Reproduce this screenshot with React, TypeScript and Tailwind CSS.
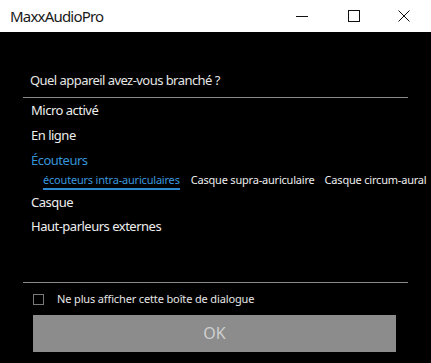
import React from 'react'

const FONT = { fontFamily: '"Noto Sans", "Open Sans", sans-serif' }

function TitleBar() {
  return (
    <div className="flex h-8 items-center bg-white text-[#1a1a1a]">
      <span className="pl-[10px] text-[15px] tracking-[-0.8px]">MaxxAudioPro</span>
      <div className="ml-auto flex h-full items-center">
        <div className="flex h-full w-[46px] items-center justify-center">
          <svg width="12" height="12" viewBox="0 0 12 12"><path d="M0 6.5h12" stroke="#111" strokeWidth="1" /></svg>
        </div>
        <div className="flex h-full w-[57px] items-center justify-center">
          <svg width="12" height="12" viewBox="0 0 12 12"><rect x="0.5" y="0.5" width="11" height="11" fill="none" stroke="#111" strokeWidth="1" /></svg>
        </div>
        <div className="flex h-full w-[49px] items-center justify-center pr-[6px]">
          <svg width="12" height="12" viewBox="0 0 12 12"><path d="M0.5 0.5l11 11M11.5 0.5l-11 11" stroke="#111" strokeWidth="1" /></svg>
        </div>
      </div>
    </div>
  )
}

export default function App() {
  const [checked, setChecked] = React.useState(false)
  return (
    <div className="h-[363px] w-[431px] overflow-hidden bg-black" style={FONT}>
      <TitleBar />
      <div className="flex flex-col">
        <div className="pl-[30px] pt-[38px] text-[13px] leading-5 tracking-[-0.55px] text-[#e6e6e6]">Quel appareil avez-vous branché ?</div>
        <div className="mx-[23px] mt-[7px] h-px bg-[#8a8a8a]" />
        <div className="flex flex-col pl-[31px] text-[13px] tracking-[-0.5px] text-[#eeeeee]">
          <div className="flex h-[25px] items-center">Micro activé</div>
          <div className="flex h-[25px] items-center">En ligne</div>
          <div className="flex h-[25px] items-center text-[#3593d8]">Écouteurs</div>
          <div className="flex h-[16px] items-start whitespace-nowrap pl-[12px] text-[11px] leading-[14px] tracking-[-0.2px]">
            <span className="border-b-2 border-[#2e8ad0] pb-[1px] text-[#3a98de]">écouteurs intra-auriculaires</span>
            <span className="pl-[11px]">Casque supra-auriculaire</span>
            <span className="pl-[10px]">Casque circum-aural</span>
          </div>
          <div className="flex h-[25px] items-center pt-[2px]">Casque</div>
          <div className="flex h-[25px] items-center">Haut-parleurs externes</div>
        </div>
        <div className="mx-[23px] mt-[43px] h-px bg-[#8a8a8a]" />
        <label className="flex items-center pl-[33px] pt-[8px] text-[11px] tracking-[-0.14px] text-[#e6e6e6]">
          <input type="checkbox" checked={checked} onChange={() => setChecked(!checked)} className="sr-only" />
          <span className="h-[11px] w-[11px] border border-[#7a7a7a]" />
          <span className="pl-[13px]">Ne plus afficher cette boîte de dialogue</span>
        </label>
        <button className="mx-[33px] mt-[7px] h-[37px] w-[363px] bg-[#8c8c8c] text-[16px] text-[#cfcfcf]">OK</button>
      </div>
    </div>
  )
}
